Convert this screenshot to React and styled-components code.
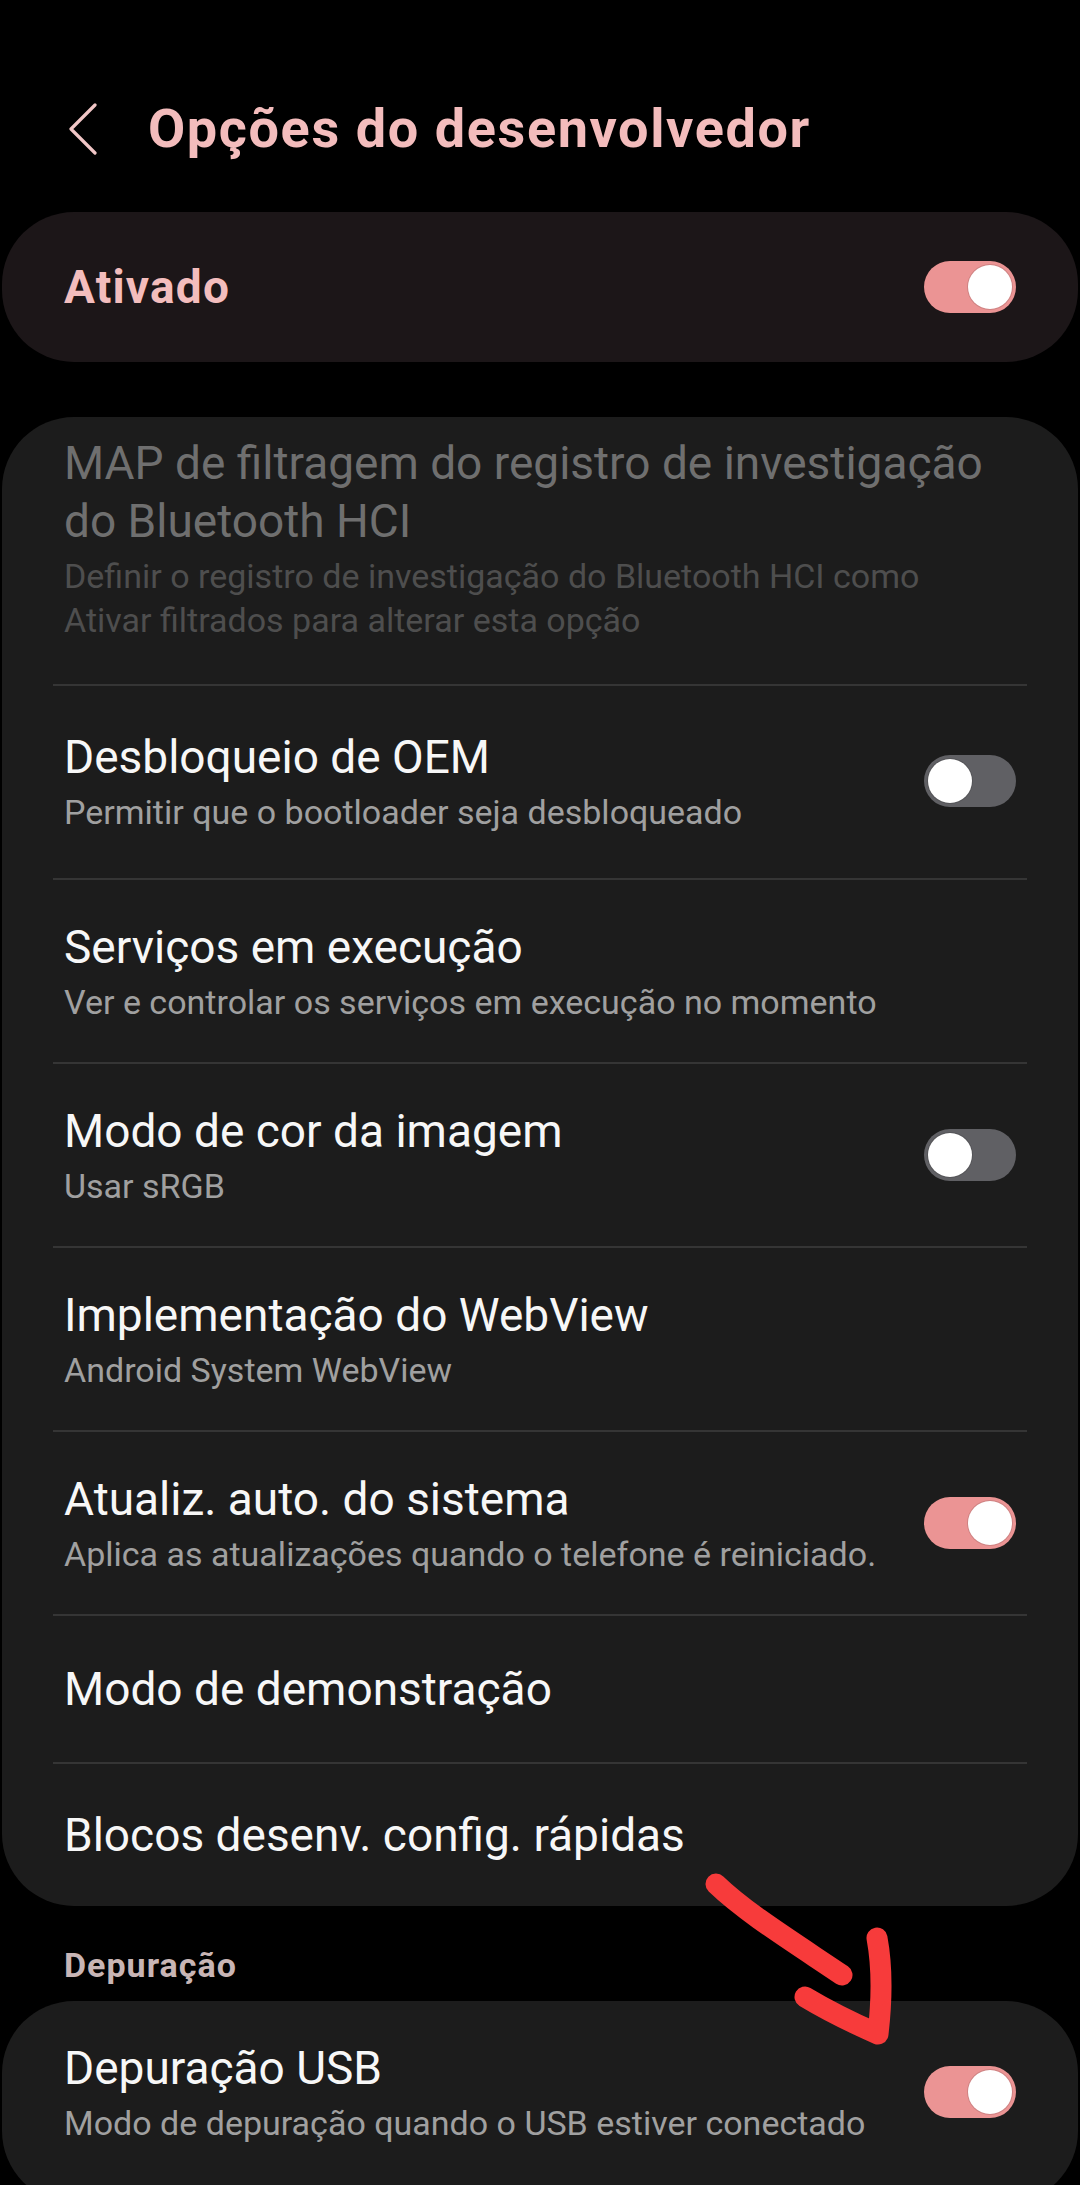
import React from "react";
import styled, { createGlobalStyle } from "styled-components";

const Global = createGlobalStyle`
  html, body { margin: 0; padding: 0; background: #000; }
  body { font-family: Roboto, "Noto Sans", Arial, sans-serif; -webkit-font-smoothing: antialiased; }
  * { box-sizing: border-box; }
`;

const Page = styled.div`
  position: relative;
  width: 1080px;
  height: 2185px;
  overflow: hidden;
  background: #000;
  padding: 0 2px;
`;

const Header = styled.header`
  height: 212px;
  padding: 99px 0 0 66px;
`;

const HeaderRow = styled.div`
  display: flex;
  align-items: center;
  height: 60px;
  gap: 50px;
`;

const Title = styled.h1`
  margin: 0;
  font-size: 54px;
  line-height: 60px;
  font-weight: 700;
  color: #f3bcbc;
  letter-spacing: 1.6px;
  white-space: nowrap;
`;

const MasterCard = styled.div`
  height: 150px;
  border-radius: 72px;
  background: #1c1618;
  display: flex;
  align-items: center;
  justify-content: space-between;
  padding: 0 62px;
`;

const MasterLabel = styled.span`
  font-size: 46px;
  font-weight: 700;
  letter-spacing: 1.2px;
  color: #f3bdbd;
`;

const Card = styled.section`
  margin-top: ${(p) => p.$mt}px;
  background: #1c1c1c;
  border-radius: 72px;
  padding-bottom: ${(p) => p.$pb || 0}px;
`;

const Row = styled.div`
  display: flex;
  align-items: center;
  justify-content: space-between;
  gap: 24px;
  padding: ${(p) => p.$pt}px 62px ${(p) => p.$pb}px;
`;

const Texts = styled.div`
  display: flex;
  flex-direction: column;
  min-width: 0;
  max-width: 935px;
`;

const ItemTitle = styled.div`
  font-size: 46px;
  line-height: 58px;
  color: ${(p) => (p.$disabled ? "#6f6f6f" : "#f7f7f7")};
`;

const ItemSummary = styled.div`
  margin-top: 4px;
  font-size: 34px;
  line-height: 44px;
  color: ${(p) => (p.$disabled ? "#4e4e4e" : "#a0a0a0")};
`;

const Divider = styled.hr`
  margin: 0 51px;
  border: 0;
  height: 2px;
  background: #353535;
`;

const SectionHeader = styled.h2`
  margin: 39px 0 16px;
  padding-left: 62px;
  font-size: 34px;
  line-height: 40px;
  font-weight: 700;
  letter-spacing: 1px;
  color: #c8b5b5;
`;

const Track = styled.div`
  flex: none;
  width: 92px;
  height: 52px;
  border-radius: 26px;
  background: ${(p) => (p.$on ? "#eb9494" : "#606064")};
  display: flex;
  align-items: center;
  justify-content: ${(p) => (p.$on ? "flex-end" : "flex-start")};
  padding: 0 4px;
`;

const Knob = styled.div`
  width: 44px;
  height: 44px;
  border-radius: 50%;
  background: #fff;
  box-shadow: 0 0 0 1px rgba(0, 0, 0, 0.12);
`;

const Switch = ({ on }) => (
  <Track $on={on}>
    <Knob />
  </Track>
);

const Annotation = styled.svg`
  position: absolute;
  left: 0;
  top: 0;
  pointer-events: none;
`;

const BackIcon = () => (
  <svg width="30" height="52" viewBox="0 0 30 52">
    <path
      d="M27 2 L3 26 L27 50"
      fill="none"
      stroke="#f1c6c6"
      strokeWidth="3.2"
      strokeLinecap="round"
      strokeLinejoin="round"
    />
  </svg>
);

const items = [
  {
    title: "MAP de filtragem do registro de investigação do Bluetooth HCI",
    summary:
      "Definir o registro de investigação do Bluetooth HCI como Ativar filtrados para alterar esta opção",
    disabled: true,
    pt: 17,
    pb: 42,
  },
  {
    title: "Desbloqueio de OEM",
    summary: "Permitir que o bootloader seja desbloqueado",
    toggle: false,
    pt: 42,
    pb: 44,
  },
  {
    title: "Serviços em execução",
    summary: "Ver e controlar os serviços em execução no momento",
    pt: 38,
    pb: 38,
  },
  { title: "Modo de cor da imagem", summary: "Usar sRGB", toggle: false, pt: 38, pb: 38 },
  { title: "Implementação do WebView", summary: "Android System WebView", pt: 38, pb: 38 },
  {
    title: "Atualiz. auto. do sistema",
    summary: "Aplica as atualizações quando o telefone é reiniciado.",
    toggle: true,
    pt: 38,
    pb: 38,
  },
  { title: "Modo de demonstração", pt: 44, pb: 44 },
  { title: "Blocos desenv. config. rápidas", pt: 42, pb: 42 },
];

export default function App() {
  return (
    <Page>
      <Global />
      <Header>
        <HeaderRow>
          <BackIcon />
          <Title>Opções do desenvolvedor</Title>
        </HeaderRow>
      </Header>

      <MasterCard>
        <MasterLabel>Ativado</MasterLabel>
        <Switch on />
      </MasterCard>

      <Card $mt={55}>
        {items.map((it, i) => (
          <React.Fragment key={it.title}>
            {i > 0 && <Divider />}
            <Row $pt={it.pt} $pb={it.pb}>
              <Texts>
                <ItemTitle $disabled={it.disabled}>{it.title}</ItemTitle>
                {it.summary && <ItemSummary $disabled={it.disabled}>{it.summary}</ItemSummary>}
              </Texts>
              {it.toggle !== undefined && <Switch on={it.toggle} />}
            </Row>
          </React.Fragment>
        ))}
      </Card>

      <SectionHeader>Depuração</SectionHeader>

      <Card $mt={0} $pb={20}>
        <Row $pt={38} $pb={38}>
          <Texts>
            <ItemTitle>Depuração USB</ItemTitle>
            <ItemSummary>Modo de depuração quando o USB estiver conectado</ItemSummary>
          </Texts>
          <Switch on />
        </Row>
      </Card>

      <Annotation width="1080" height="2185" viewBox="0 0 1080 2185">
        <path
          d="M716 1884 C 745 1912, 790 1940, 842 1975"
          fill="none"
          stroke="#f73b3b"
          strokeWidth="21"
          strokeLinecap="round"
        />
        <path
          d="M805 1997 C 830 2012, 855 2024, 878 2034 C 882 2000, 882 1965, 877 1938"
          fill="none"
          stroke="#f73b3b"
          strokeWidth="21"
          strokeLinecap="round"
          strokeLinejoin="round"
        />
      </Annotation>
    </Page>
  );
}
